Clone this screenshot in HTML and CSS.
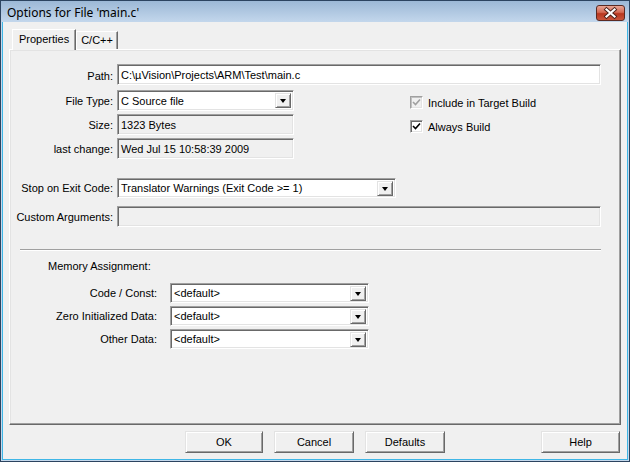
FILE: index.html
```html
<!doctype html>
<html>
<head>
<meta charset="utf-8">
<title>Options for File 'main.c'</title>
<link rel="stylesheet" href="styles.css">
</head>
<body>
<div class="window">
  <div class="titlebar">
    <span class="caption">Options for File 'main.c'</span>
    <span class="close">
      <svg width="27" height="14" viewBox="0 0 27 14">
        <path d="M9.5 3.5 L17.5 10.5 M17.5 3.5 L9.5 10.5" stroke="#4a2018" stroke-width="4" stroke-linecap="square"/>
        <path d="M9.5 3.5 L17.5 10.5 M17.5 3.5 L9.5 10.5" stroke="#fff" stroke-width="2.2" stroke-linecap="square"/>
      </svg>
    </span>
  </div>

  <div class="client">
    <div class="tabs">
      <span class="tab active">Properties</span>
      <span class="tab">C/C++</span>
    </div>

    <div class="panel">
      <div class="props">
        <label>Path:</label>
        <div class="edit path">C:\µVision\Projects\ARM\Test\main.c</div>

        <label>File Type:</label>
        <div class="combo w177"><span>C Source file</span><i class="drop"></i></div>
        <div class="check r2 disabled"><span class="box"><svg width="9" height="9" viewBox="0 0 9 9"><path d="M1 4 L3.5 6.5 L8 1.5" stroke="#a0a0a0" stroke-width="1.6" fill="none"/></svg></span>Include in Target Build</div>

        <label>Size:</label>
        <div class="edit readonly w177">1323 Bytes</div>
        <div class="check r3"><span class="box"><svg width="9" height="9" viewBox="0 0 9 9"><path d="M1 4 L3.5 6.5 L8 1.5" stroke="#000" stroke-width="1.6" fill="none"/></svg></span>Always Build</div>

        <label>last change:</label>
        <div class="edit readonly w177">Wed Jul 15 10:58:39 2009</div>
      </div>

      <div class="exit">
        <label>Stop on Exit Code:</label>
        <div class="combo w279"><span>Translator Warnings (Exit Code &gt;= 1)</span><i class="drop"></i></div>
        <label>Custom Arguments:</label>
        <div class="edit readonly w484"></div>
      </div>

      <hr class="sep">

      <div class="memory">
        <div class="heading">Memory Assignment:</div>
        <div class="mem-grid">
          <label>Code / Const:</label>
          <div class="combo w199"><span>&lt;default&gt;</span><i class="drop"></i></div>
          <label>Zero Initialized Data:</label>
          <div class="combo w199"><span>&lt;default&gt;</span><i class="drop"></i></div>
          <label>Other Data:</label>
          <div class="combo w199"><span>&lt;default&gt;</span><i class="drop"></i></div>
        </div>
      </div>
    </div>

    <div class="buttons">
      <button class="btn ok">OK</button>
      <button class="btn">Cancel</button>
      <button class="btn">Defaults</button>
      <button class="btn help">Help</button>
    </div>
  </div>
</div>
</body>
</html>
```

FILE: styles.css
```css
body {
	margin: 0;
	font-family: "Liberation Sans", Arial, sans-serif;
	font-size: 11px;
	color: #000;
}
.window {
	width: 630px;
	height: 462px;
	box-sizing: border-box;
	border: 1px solid #2c4460;
	background: #c4d8ec;
	display: flex;
	flex-direction: column;
}
.titlebar {
	height: 21px;
	background: linear-gradient(#9cb8d6, #c3d7ec);
	display: flex;
	align-items: center;
	padding: 0 4px 0 6px;
	flex: none;
}
.caption {
	font-family: "Noto Sans", "Open Sans", sans-serif;
	font-size: 12px;
	flex: 1;
	margin-top: 1px;
}
.close {
	width: 27px;
	height: 14px;
	border: 1px solid #5a2a22;
	border-radius: 3px;
	background: linear-gradient(#e9a594, #d46a54 45%, #b8371f 55%, #c9553c);
	display: flex;
	margin-top: 3px;
}
.client {
	flex: 1;
	margin: 0 1px 1px;
	border: 1px solid #3fb6e6;
	border-top: none;
	background: #f0f0f0;
	display: flex;
	flex-direction: column;
	padding: 7px 6px 6px 6px;
}

/* tab strip */
.tabs {
	display: flex;
	align-items: flex-end;
	height: 20px;
	padding-left: 3px;
	position: relative;
	z-index: 1;
}
.tab {
	height: 18px;
	line-height: 17px;
	padding: 0 4px;
	border: 1px solid #fff;
	border-bottom: none;
	border-right: 1px solid #696969;
	box-shadow: inset -1px 0 #a0a0a0;
	box-sizing: border-box;
	background: #f0f0f0;
}
.tab.active {
	height: 21px;
	padding: 0 6px;
	margin-bottom: -1px;
	line-height: 19px;
}

/* page under the tabs */
.panel {
	flex: 1;
	border-top: 1px solid #fff;
	border-left: 1px solid #fff;
	border-right: 1px solid #696969;
	border-bottom: 1px solid #696969;
	box-shadow: inset -1px -1px #a0a0a0, inset 1px 1px #e3e3e3;
	padding: 14px 0 0 0;
}
label {
	text-align: right;
	align-self: center;
}
.props {
	display: grid;
	grid-template-columns: 103px 177px 1fr;
	grid-template-rows: 23px 21px 21px 21px;
	column-gap: 4px;
	row-gap: 3px;
}
.props .path {
	grid-column: 2 / 4;
	width: 484px;
}
.w177 { width: 177px; }
.w199 { width: 199px; }
.w279 { width: 279px; }
.w484 { width: 484px; }

/* sunken edit box */
.edit, .combo {
	box-sizing: border-box;
	height: 21px;
	border-top: 1px solid #a0a0a0;
	border-left: 1px solid #a0a0a0;
	border-right: 1px solid #fff;
	border-bottom: 1px solid #fff;
	box-shadow: inset 1px 1px #696969, inset -1px -1px #e3e3e3;
	background: #fff;
	padding: 0 3px;
	display: flex;
	align-items: center;
	white-space: nowrap;
}
.edit.readonly {
	background: #f0f0f0;
}
.combo span {
	flex: 1;
}
.drop {
	width: 16px;
	height: 15px;
	box-sizing: border-box;
	margin-right: -1px;
	border-top: 1px solid #e3e3e3;
	border-left: 1px solid #e3e3e3;
	border-right: 1px solid #696969;
	border-bottom: 1px solid #696969;
	box-shadow: inset 1px 1px #fff, inset -1px -1px #a0a0a0;
	background: #f0f0f0;
	display: flex;
	align-items: center;
	justify-content: center;
}
.drop::after {
	content: "";
	border-left: 3.5px solid transparent;
	border-right: 3.5px solid transparent;
	border-top: 4px solid #000;
	margin-top: 1px;
}

/* check boxes on the right */
.check {
	grid-column: 3;
	display: flex;
	align-items: center;
	padding-left: 112px;
	margin-top: 4px;
}
.check.r2 { grid-row: 2; }
.check.r3 { grid-row: 3; }
.check .box {
	width: 13px;
	height: 13px;
	box-sizing: border-box;
	border-top: 1px solid #a0a0a0;
	border-left: 1px solid #a0a0a0;
	border-right: 1px solid #fff;
	border-bottom: 1px solid #fff;
	box-shadow: inset 1px 1px #696969, inset -1px -1px #e3e3e3;
	background: #fff;
	display: flex;
	align-items: center;
	justify-content: center;
	margin-right: 5px;
}
.check.disabled .box {
	background: #f0f0f0;
	box-shadow: inset 1px 1px #c0c0c0, inset -1px -1px #e3e3e3;
}
.exit {
	display: grid;
	grid-template-columns: 103px auto;
	justify-content: start;
	column-gap: 4px;
	row-gap: 8px;
	margin-top: 19px;
}
.exit .combo {
	height: 20px;
}
.sep {
	margin: 22px 19px 0 10px;
	border: none;
	border-top: 1px solid #a0a0a0;
	border-bottom: 1px solid #fff;
}
.memory .heading {
	padding-left: 38px;
	margin-top: 9px;
}
.mem-grid {
	display: grid;
	grid-template-columns: 147px 199px;
	column-gap: 13px;
	row-gap: 3px;
	margin-top: 11px;
}
.mem-grid .combo {
	height: 20px;
}

/* dialog buttons */
.buttons {
	display: flex;
	height: 22px;
	margin-top: 6px;
	padding-left: 176px;
	gap: 11px;
	flex: none;
}
.btn {
	width: 80px;
	height: 22px;
	font-family: inherit;
	font-size: 11px;
	background: #f0f0f0;
	border-top: 1px solid #e3e3e3;
	border-left: 1px solid #e3e3e3;
	border-right: 1px solid #696969;
	border-bottom: 1px solid #696969;
	box-shadow: inset 1px 1px #fff, inset -1px -1px #a0a0a0;
	padding: 0;
	color: #000;
}
.btn.ok {
	width: 78px;
}
.btn.help {
	margin-left: auto;
	width: 79px;
	margin-right: 1px;
}
```
